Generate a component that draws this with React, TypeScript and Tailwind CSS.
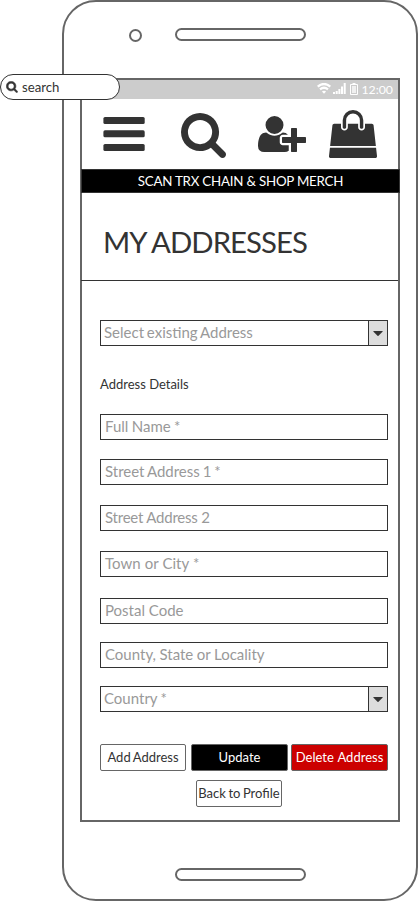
import type { ReactNode } from "react";

const SEARCH =
  "M1152 832q0-185-131.5-316.5t-316.5-131.5-316.5 131.5-131.5 316.5 131.5 316.5 316.5 131.5 316.5-131.5 131.5-316.5zm512 832q0 52-38 90t-90 38q-54 0-90-38l-343-342q-179 124-399 124-143 0-273.5-55.5t-225-150-150-225-55.5-273.5 55.5-273.5 150-225 225-150 273.5-55.5 273.5 55.5 225 150 150 225 55.5 273.5q0 220-124 399l343 343q37 37 37 90z";
const USER_PLUS =
  "M704 896q-159 0-271.5-112.5t-112.5-271.5 112.5-271.5 271.5-112.5 271.5 112.5 112.5 271.5-112.5 271.5-271.5 112.5zm960 128h352q13 0 22.5 9.5t9.5 22.5v192q0 13-9.5 22.5t-22.5 9.5h-352v352q0 13-9.5 22.5t-22.5 9.5h-192q-13 0-22.5-9.5t-9.5-22.5v-352h-352q-13 0-22.5-9.5t-9.5-22.5v-192q0-13 9.5-22.5t22.5-9.5h352v-352q0-13 9.5-22.5t22.5-9.5h192q13 0 22.5 9.5t9.5 22.5v352zm-736 224q0 52 38 90t90 38h256v238q-68 50-171 50h-874q-121 0-194-69t-73-190q0-53 3.5-103.5t14-109 26.5-108.5 43-97.5 62-81 85.5-53.5 111.5-20q19 0 39 17 79 61 154.5 91.5t164.5 30.5 164.5-30.5 154.5-91.5q20-17 39-17 132 0 217 96h-223q-52 0-90 38t-38 90v192z";
const BAG =
  "M1757 1408l35 313q3 28-16 50-19 21-48 21h-1664q-29 0-48-21-19-22-16-50l35-313h1722zm-93-839l86 775h-1708l86-775q3-24 21-40.5t43-16.5h256v128q0 53 37.5 90.5t90.5 37.5 90.5-37.5 37.5-90.5v-128h384v128q0 53 37.5 90.5t90.5 37.5 90.5-37.5 37.5-90.5v-128h256q25 0 43 16.5t21 40.5zm-384-185v256q0 26-19 45t-45 19-45-19-19-45v-256q0-106-75-181t-181-75-181 75-75 181v256q0 26-19 45t-45 19-45-19-19-45v-256q0-159 112.5-271.5t271.5-112.5 271.5 112.5 112.5 271.5z";

function Select({ label, className = "" }: { label: string; className?: string }) {
  return (
    <div className={`flex h-[26px] shrink-0 border border-[#333] text-[15px] text-[#999] ${className}`}>
      <span className="flex-1 pl-[3px] leading-[23px]">{label}</span>
      <span className="flex w-[19px] items-center justify-center border-l border-[#333] bg-[#ddd]">
        <svg width="10" height="5" viewBox="0 0 10 5" fill="#333">
          <path d="M.7 0h8.6q.6.1.2.7L5.5 4.7q-.5.4-1 0L.5.7Q.1.1.7 0z" />
        </svg>
      </span>
    </div>
  );
}

function Field({ label, className = "" }: { label: string; className?: string }) {
  return (
    <div className={`h-[26px] shrink-0 border border-[#333] pl-1 text-[15px] leading-[23px] text-[#999] ${className}`}>
      {label}
    </div>
  );
}

function Button({ children, className = "" }: { children: ReactNode; className?: string }) {
  return (
    <button
      className={`flex h-[27px] items-center justify-center rounded-[2px] border border-[#666] text-[13px] whitespace-nowrap ${className}`}
    >
      {children}
    </button>
  );
}

function StatusBar() {
  return (
    <div className="flex h-[19px] shrink-0 items-start justify-end bg-[#ccc] pr-[5px] text-white">
      <svg className="mt-[3px]" width="14" height="11" viewBox="0 0 14 11" fill="none" stroke="#fff" strokeWidth="2.3">
        <path d="M.7 3.6Q7-1.6 13.3 3.6M3 6.3q4-3.2 8 0" />
        <path d="M4.9 8.4Q7 6.9 9.1 8.4L7 10.8z" fill="#fff" stroke="none" />
      </svg>
      <svg className="mt-[3px] ml-[2px]" width="13" height="11" viewBox="0 0 13 11" fill="#fff">
        <path d="M0 9h2v2H0zM2.7 8h2v3h-2zM5.4 6h2v5h-2zM8 3.5h2V11H8zM10.7 0h2v11h-2z" />
      </svg>
      <svg className="mt-[3px] ml-[4px]" width="8" height="12" viewBox="0 0 8 12" fill="none" stroke="#fff">
        <path d="M.5 1.5h7v10h-7zM2.5 .5h3" />
        <path d="M2 3h4v7H2z" fill="#fff" fillOpacity=".7" stroke="none" />
      </svg>
      <span className="ml-[3px] text-[12.3px] leading-[20px]">12:00</span>
    </div>
  );
}

export default function App() {
  return (
    <div className="relative h-[901px] w-[418px] overflow-hidden bg-white font-['Lato',sans-serif] text-[#333]">
      <div className="ml-[62px] flex h-[901px] w-[356px] flex-col rounded-[34px] border-2 border-[#666] bg-white px-4">
        <div className="flex h-[76px] shrink-0">
          <span className="mt-[27px] ml-[49px] size-[13px] rounded-full border-2 border-[#666]" />
          <span className="mt-[26px] ml-[33px] h-[13px] w-[131px] rounded-full border-2 border-[#666]" />
        </div>

        <main className="flex h-[744px] w-[320px] shrink-0 flex-col border-2 border-[#666]">
          <StatusBar />
          <nav className="flex h-[70px] shrink-0 items-start">
            <svg className="mt-[18px] ml-[21px]" width="42" height="34" viewBox="0 0 42 34" fill="#333">
              <rect x=".4" width="41.3" height="7" rx="1.6" />
              <rect x=".4" y="13.3" width="41.3" height="7" rx="1.6" />
              <rect x=".4" y="27" width="41.3" height="7" rx="1.6" />
            </svg>
            <svg className="mt-[14px] ml-[36px]" width="45" height="45" viewBox="0 128 1664 1664" fill="#333">
              <path d={SEARCH} />
            </svg>
            <svg className="mt-[17px] ml-[32px]" width="48" height="36" viewBox="0 128 2048 1536" fill="#333">
              <path d={USER_PLUS} />
            </svg>
            <svg className="mt-[11px] ml-[23px]" width="48" height="48" viewBox="0 0 1792 1792" fill="#333">
              <path d={BAG} />
            </svg>
          </nav>
          <div className="-mr-[2px] -ml-px h-6 shrink-0 border border-[#333] bg-black text-center text-[13.33px] leading-[22px] tracking-[-0.22px] text-white">
            SCAN TRX CHAIN &amp; SHOP MERCH
          </div>
          <h1 className="-ml-px h-[88px] shrink-0 border-b border-[#333] pl-[22px] text-[29.33px] leading-[98px] tracking-[-0.95px]">
            MY ADDRESSES
          </h1>

          <form className="flex w-[306px] flex-col pl-[18px]">
            <Select label="Select existing Address" className="mt-[39px] [word-spacing:-1px]" />
            <h2 className="mt-7 h-5 text-[13px] leading-5">Address Details</h2>
            <Field label="Full Name *" className="mt-5 [word-spacing:-0.5px]" />
            <Field label="Street Address 1 *" className="mt-[19px] [word-spacing:-0.9px]" />
            <Field label="Street Address 2" className="mt-5 tracking-[-0.22px]" />
            <Field label="Town or City *" className="mt-5 [word-spacing:0.3px]" />
            <Field label="Postal Code" className="mt-[21px]" />
            <Field label="County, State or Locality" className="mt-[18px] [word-spacing:-0.3px]" />
            <Select label="Country *" className="mt-[18px] [word-spacing:-0.5px]" />
            <div className="mt-8 flex">
              <Button className="w-[86px] bg-white [word-spacing:-0.8px]">Add Address</Button>
              <Button className="ml-[5px] w-[97px] bg-black text-white">Update</Button>
              <Button className="ml-[3px] w-[97px] bg-[#c00] text-white [word-spacing:0.8px]">Delete Address</Button>
            </div>
            <Button className="mt-[9px] ml-[96px] w-[86px] bg-white [word-spacing:-0.8px]">Back to Profile</Button>
          </form>
        </main>

        <span className="mt-[46px] ml-[95px] h-[13px] w-[131px] rounded-full border-2 border-[#666]" />
      </div>

      <div className="absolute top-[74px] left-0 flex h-[26px] w-[120px] items-center rounded-full border border-[#333] bg-white pl-[5px]">
        <svg className="-mt-px" width="12" height="12" viewBox="-60 68 1784 1784" fill="#333" stroke="#333" strokeWidth="90">
          <path d={SEARCH} />
        </svg>
        <span className="ml-1 text-[13.2px] leading-6">search</span>
      </div>
    </div>
  );
}
